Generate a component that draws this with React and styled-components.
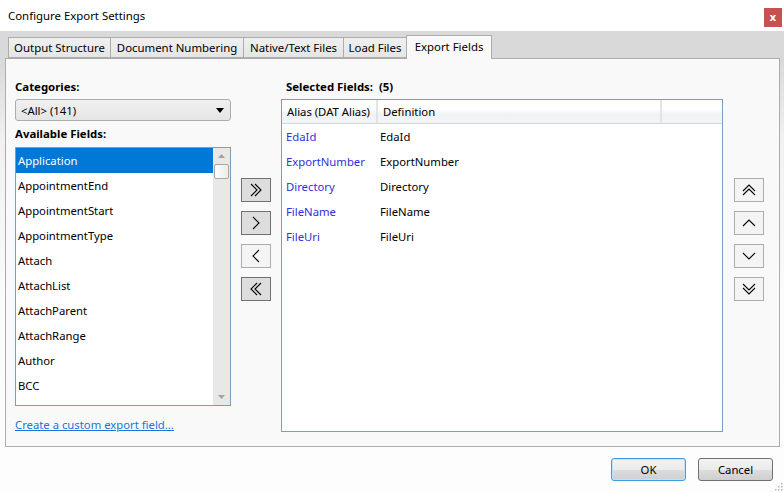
import React from 'react';
import styled, { createGlobalStyle } from 'styled-components';

const GlobalStyle = createGlobalStyle`
  html, body {
    margin: 0;
    padding: 0;
  }
  body {
    font-family: "Noto Sans", "Open Sans", sans-serif;
    font-size: 11.3px;
    color: #000;
  }
  * {
    box-sizing: border-box;
  }
`;

const availableFields = [
  'Application',
  'AppointmentEnd',
  'AppointmentStart',
  'AppointmentType',
  'Attach',
  'AttachList',
  'AttachParent',
  'AttachRange',
  'Author',
  'BCC',
];

const selectedFields = [
  ['EdaId', 'EdaId'],
  ['ExportNumber', 'ExportNumber'],
  ['Directory', 'Directory'],
  ['FileName', 'FileName'],
  ['FileUri', 'FileUri'],
];

const tabs = [
  { label: 'Output Structure', width: 103 },
  { label: 'Document Numbering', width: 134 },
  { label: 'Native/Text Files', width: 101 },
  { label: 'Load Files', width: 64 },
  { label: 'Export Fields', width: 86, active: true },
];

const chevrons = {
  right: ['5,2 11,8 5,14'],
  right2: ['3,2 9,8 3,14', '7,2 13,8 7,14'],
  left: ['11,2 5,8 11,14'],
  left2: ['9,2 3,8 9,14', '13,2 7,8 13,14'],
  up: ['2,11 8,5 14,11'],
  up2: ['2,9 8,3 14,9', '2,13 8,7 14,13'],
  down: ['2,5 8,11 14,5'],
  down2: ['2,3 8,9 14,3', '2,7 8,13 14,7'],
};

const Chevron = ({ dir }) => (
  <svg width="16" height="16" viewBox="0 0 16 16">
    {chevrons[dir].map((p) => (
      <polyline key={p} points={p} fill="none" stroke="#000" strokeWidth="1.1" />
    ))}
  </svg>
);

const App = () => {
  return (
    <React.Fragment>
      <GlobalStyle />
      <Window>
        <TitleBar>
          <Title>Configure Export Settings</Title>
          <CloseButton>x</CloseButton>
        </TitleBar>
        <Body>
          <TabStrip>
            {tabs.map((t) => (
              <Tab key={t.label} $width={t.width} $active={t.active}>
                {t.label}
              </Tab>
            ))}
          </TabStrip>
          <Panel>
            <LeftColumn>
              <Label>Categories:</Label>
              <Select>
                <span>&lt;All&gt; (141)</span>
                <svg width="8" height="5" viewBox="0 0 8 5">
                  <polygon points="0,0 8,0 4,5" fill="#000" />
                </svg>
              </Select>
              <Label $top={5}>Available Fields:</Label>
              <ListBox>
                <Items>
                  {availableFields.map((f, i) => (
                    <Item key={f} $selected={i === 0}>
                      {f}
                    </Item>
                  ))}
                </Items>
                <ScrollBar>
                  <svg width="7" height="4" viewBox="0 0 7 4">
                    <polygon points="0,4 7,4 3.5,0" fill="#a3a3a3" />
                  </svg>
                  <Thumb />
                  <Spacer />
                  <svg width="7" height="4" viewBox="0 0 7 4">
                    <polygon points="0,0 7,0 3.5,4" fill="#a3a3a3" />
                  </svg>
                </ScrollBar>
              </ListBox>
              <Link>Create a custom export field...</Link>
            </LeftColumn>

            <ButtonColumn $left={10}>
              <IconButton $dark>
                <Chevron dir="right2" />
              </IconButton>
              <IconButton $dark>
                <Chevron dir="right" />
              </IconButton>
              <IconButton>
                <Chevron dir="left" />
              </IconButton>
              <IconButton $dark>
                <Chevron dir="left2" />
              </IconButton>
            </ButtonColumn>

            <RightColumn>
              <Label $indent={5}>
                Selected Fields:&nbsp; (5)
              </Label>
              <Grid>
                <HeaderRow>
                  <HeaderCell $width={96}>Alias (DAT Alias)</HeaderCell>
                  <HeaderCell $width={284}>Definition</HeaderCell>
                  <HeaderCell $width={62} />
                </HeaderRow>
                {selectedFields.map(([alias, def]) => (
                  <Row key={alias}>
                    <Cell $width={96} $alias>
                      {alias}
                    </Cell>
                    <Cell $width={284}>{def}</Cell>
                  </Row>
                ))}
              </Grid>
            </RightColumn>

            <ButtonColumn $left={11}>
              <IconButton>
                <Chevron dir="up2" />
              </IconButton>
              <IconButton>
                <Chevron dir="up" />
              </IconButton>
              <IconButton>
                <Chevron dir="down" />
              </IconButton>
              <IconButton>
                <Chevron dir="down2" />
              </IconButton>
            </ButtonColumn>
          </Panel>
          <Footer>
            <DialogButton $default>OK</DialogButton>
            <DialogButton>Cancel</DialogButton>
          </Footer>
        </Body>
        <Grip>
          <svg width="10" height="10" viewBox="0 0 10 10">
            {[
              [8, 2],
              [8, 5],
              [5, 5],
              [8, 8],
              [5, 8],
              [2, 8],
            ].map(([x, y]) => (
              <rect key={`${x}-${y}`} x={x} y={y} width="1.5" height="1.5" fill="#b8b8b8" />
            ))}
          </svg>
        </Grip>
      </Window>
    </React.Fragment>
  );
};
export default App;

const Window = styled.div`
  position: relative;
  width: 784px;
  height: 492px;
  display: flex;
  flex-direction: column;
  background: linear-gradient(#d9d9d9 0px, #d9d9d9 60px, #f1f1f1 140px, #fbfbfb 300px, #fdfdfd 100%);
  overflow: hidden;
`;

const TitleBar = styled.div`
  height: 31px;
  flex: none;
  background: #fff;
  display: flex;
  align-items: flex-start;
  justify-content: space-between;
  padding: 0 2px 0 8px;
`;

const Title = styled.span`
  margin-top: 7px;
  font-size: 11.4px;
  line-height: 17px;
  color: #000;
`;

const CloseButton = styled.div`
  margin-top: 8px;
  width: 18px;
  height: 19px;
  background: #c75050;
  color: #fff;
  font-weight: 700;
  font-size: 11px;
  line-height: 17px;
  text-align: center;
`;

const Body = styled.div`
  flex: 1;
  display: flex;
  flex-direction: column;
  padding: 4px 4px 0 5px;
`;

const TabStrip = styled.div`
  display: flex;
  align-items: flex-end;
  height: 23px;
  padding-left: 3px;
  position: relative;
  z-index: 1;
`;

const Tab = styled.div`
  width: ${(p) => p.$width}px;
  height: ${(p) => (p.$active ? 24 : 21)}px;
  margin-left: -1px;
  margin-bottom: ${(p) => (p.$active ? -1 : 0)}px;
  border: 1px solid #acacac;
  border-bottom: ${(p) => (p.$active ? 'none' : '1px solid #acacac')};
  background: ${(p) => (p.$active ? '#f9f9f9' : 'linear-gradient(#f0f0f0, #e5e5e5)')};
  display: flex;
  align-items: ${(p) => (p.$active ? 'flex-start' : 'center')};
  justify-content: center;
  padding-top: ${(p) => (p.$active ? 3 : 0)}px;
  font-size: 11.4px;
  line-height: 16px;
  white-space: nowrap;
  color: #000;

  &:first-child {
    margin-left: 0;
  }
`;

const Panel = styled.div`
  height: 389px;
  flex: none;
  background: #f9f9f9;
  border: 1px solid #acacac;
  display: flex;
  align-items: flex-start;
  padding: 20px 0 0 9px;
`;

const LeftColumn = styled.div`
  width: 216px;
  display: flex;
  flex-direction: column;
`;

const Label = styled.div`
  font-weight: 700;
  font-size: 11.4px;
  line-height: 16px;
  margin-top: ${(p) => p.$top || 0}px;
  margin-bottom: ${(p) => (p.$top ? 5 : 4)}px;
  padding-left: ${(p) => p.$indent || 0}px;
  white-space: nowrap;
`;

const Select = styled.div`
  height: 22px;
  border: 1px solid #acacac;
  border-radius: 3px;
  background: linear-gradient(#f0f0f0, #e5e5e5);
  display: flex;
  align-items: center;
  justify-content: space-between;
  padding: 0 6px 0 5px;
`;

const ListBox = styled.div`
  height: 259px;
  border: 1px solid #7f9db9;
  background: #fff;
  display: flex;
  overflow: hidden;
`;

const Items = styled.div`
  flex: 1;
  display: flex;
  flex-direction: column;
`;

const Item = styled.div`
  height: 25px;
  flex: none;
  padding-left: 2px;
  display: flex;
  align-items: center;
  background: ${(p) => (p.$selected ? '#0078d7' : 'transparent')};
  color: ${(p) => (p.$selected ? '#fff' : '#000')};
`;

const ScrollBar = styled.div`
  width: 17px;
  flex: none;
  background: #e8e8e8;
  display: flex;
  flex-direction: column;
  align-items: center;
  padding: 6px 0 6px;
`;

const Thumb = styled.div`
  width: 15px;
  height: 15px;
  margin-top: 6px;
  border: 1px solid #a8a8a8;
  border-radius: 2px;
  background: linear-gradient(90deg, #fdfdfd, #ececec);
`;

const Spacer = styled.div`
  flex: 1;
`;

const Link = styled.a`
  margin-top: 11px;
  line-height: 16px;
  color: #1a73d9;
  text-decoration: underline;
  white-space: nowrap;
`;

const ButtonColumn = styled.div`
  margin-left: ${(p) => p.$left}px;
  padding-top: 99px;
  display: flex;
  flex-direction: column;
  gap: 9px;
`;

const IconButton = styled.div`
  width: 30px;
  height: 24px;
  border: 1px solid ${(p) => (p.$dark ? '#707070' : '#adadad')};
  background: ${(p) => (p.$dark ? '#dddddd' : '#f4f4f4')};
  display: flex;
  align-items: center;
  justify-content: center;
`;

const RightColumn = styled.div`
  margin-left: 10px;
  width: 442px;
  display: flex;
  flex-direction: column;
`;

const Grid = styled.div`
  height: 333px;
  border: 1px solid #7f9db9;
  background: #fff;
`;

const HeaderRow = styled.div`
  display: flex;
  height: 24px;
  background: linear-gradient(#ffffff 0%, #ffffff 40%, #f1f2f4 60%, #f3f4f6 100%);
  border-bottom: 1px solid #d5d5d5;
`;

const HeaderCell = styled.div`
  width: ${(p) => p.$width}px;
  flex: none;
  padding-left: 5px;
  display: flex;
  align-items: center;
  border-right: 2px solid #e3e4e6;
  white-space: nowrap;

  &:last-child {
    border-right: none;
  }
`;

const Row = styled.div`
  display: flex;
  height: 25px;
`;

const Cell = styled.div`
  width: ${(p) => p.$width}px;
  flex: none;
  padding-left: ${(p) => (p.$alias ? 4 : 2)}px;
  display: flex;
  align-items: center;
  color: ${(p) => (p.$alias ? '#3030dc' : '#000')};
`;

const Footer = styled.div`
  flex: 1;
  display: flex;
  justify-content: flex-end;
  align-items: flex-start;
  gap: 12px;
  padding: 11px 7px 0 0;
`;

const DialogButton = styled.div`
  width: 75px;
  height: 23px;
  border: 1px solid ${(p) => (p.$default ? '#3c9de6' : '#707070')};
  box-shadow: ${(p) => (p.$default ? 'inset 0 0 0 1px #bfe3fa' : 'none')};
  border-radius: 3px;
  background: linear-gradient(#f3f3f3 0%, #ebebeb 50%, #dddddd 51%, #cfcfcf 100%);
  display: flex;
  align-items: center;
  justify-content: center;
`;

const Grip = styled.div`
  position: absolute;
  right: 1px;
  bottom: 1px;
  width: 10px;
  height: 10px;
  display: flex;
`;
